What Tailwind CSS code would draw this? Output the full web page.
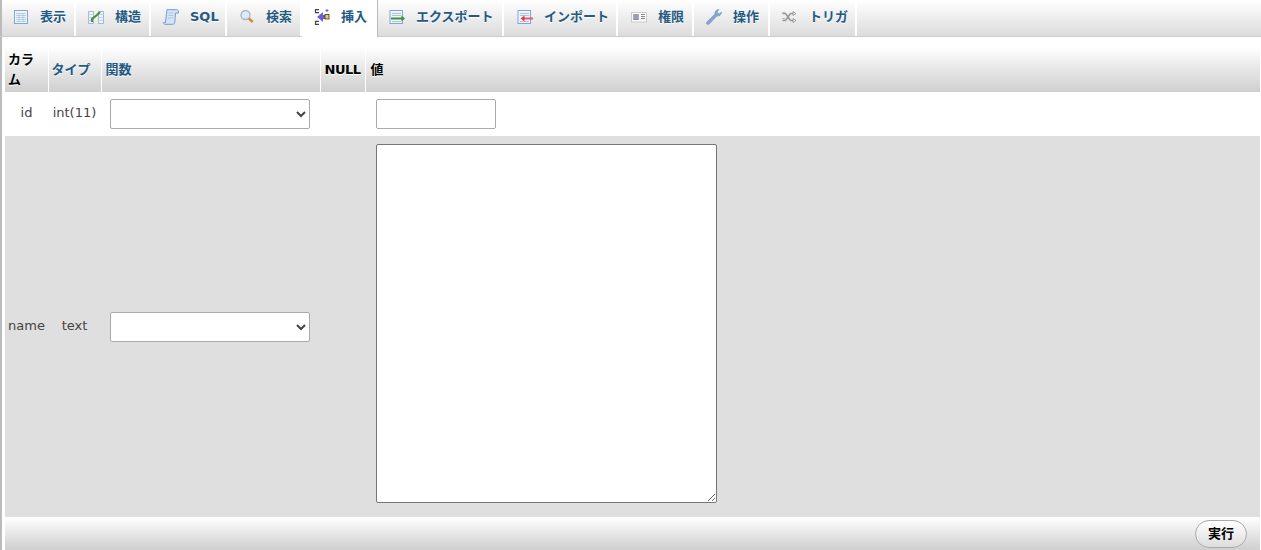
<!DOCTYPE html>
<html lang="ja">
<head>
    <meta charset="UTF-8">
    <meta name="viewport" content="width=device-width, initial-scale=1.0">
    <title>挿入</title>
    <script src="https://cdn.jsdelivr.net/npm/@tailwindcss/browser@4"></script>
</head>
<body class="bg-white overflow-hidden h-[550px] text-[13px] text-[#444] font-['DejaVu_Sans','Noto_Sans_CJK_JP',sans-serif]">

    <!-- タブ -->
    <nav class="flex h-[37px] bg-gradient-to-b from-white to-[#dcdcdc] border-b border-[#ccc] font-bold text-[#235a81] [text-shadow:0_1px_0_#fff]">
        <a class="flex items-center w-[76px] pb-[2px] pl-[11px] gap-[11px] border-l-2 border-r-2 border-l-[#bbb] border-r-white">
            <svg class="w-4 h-4 shrink-0" viewBox="0 0 16 16"><rect x="1.500" y="1.500" width="13" height="13" fill="#f0f5fc" stroke="#7fa6dc"/><path d="M3 4.500h10M3 6.500h10M3 8.500h10M3 10.500h10M3 12.500h10M6 4v9M10 4v9" stroke="#a9c3e2" stroke-width=".8"/></svg>
            <span>表示</span>
        </a>
        <a class="flex items-center w-[75px] pb-[2px] pl-[12px] gap-[11px] border-r-2 border-white">
            <svg class="w-4 h-4 shrink-0" viewBox="0 0 16 16"><path d="M.5 2.500h5v12h-5zM10.500 2.500h5v12h-5z" fill="#eef4fb" stroke="#9db8dc"/><path d="M.5 5.500h5M.5 8.500h5M.5 11.500h5M10.500 5.500h5M10.500 8.500h5M10.500 11.500h5" stroke="#c3d4e8"/><path d="M4 13V10l5-4 3-3" fill="none" stroke="#4e8f3a" stroke-width="2.200"/></svg>
            <span>構造</span>
        </a>
        <a class="flex items-center w-[76px] pb-[2px] pl-[12px] gap-[11px] border-r-2 border-white">
            <svg class="w-4 h-4 shrink-0" viewBox="0 0 16 16"><path d="M4 .7h9.500c1.500 0 2 1 2 1.800v1.500h-3L11.800 13c-.3 1.500-1 2.300-2.300 2.300H1.800C.8 15.300.4 14.500.5 13.500h2z" fill="#d5e4f7" stroke="#6f9bd6"/><path d="M5.500 4h5M5.300 6.500h5M5 9h5" stroke="#a9c3e2"/></svg>
            <span>SQL</span>
        </a>
        <a class="flex items-center w-[75px] pb-[2px] pl-[12px] gap-[11px] border-r-2 border-white">
            <svg class="w-4 h-4 shrink-0" viewBox="0 0 16 16"><circle cx="6.500" cy="6" r="4.500" fill="#dcebf8" stroke="#a9b4bd" stroke-width="1.300"/><path d="M9.800 9.500l4 3.500" stroke="#c98f3e" stroke-width="2.600"/></svg>
            <span>検索</span>
        </a>
        <a class="flex items-center w-[76px] h-[37px] pb-[3px] pl-[12px] gap-[11px] bg-white border-r border-[#bbb]">
            <svg class="w-4 h-4 shrink-0" viewBox="0 0 16 16"><path d="M5 .7H1.500v3H5M5 15.300H1.500v-3H5" fill="none" stroke="#444" stroke-width="1.200"/><path d="M3 8l6-5v3h2v4H9v3z" fill="#6a5ee0"/><rect x="11" y="5.500" width="4" height="4.500" fill="#f5d040" stroke="#333" stroke-width=".8"/><path d="M13 0v3M11.500 1.500h3" stroke="#6a5ee0"/></svg>
            <span>挿入</span>
        </a>
        <a class="flex items-center w-[126px] pb-[2px] pl-[11px] gap-[11px] border-r-2 border-white">
            <svg class="w-4 h-4 shrink-0" viewBox="0 0 16 16"><rect x="1" y="1.500" width="12.500" height="13" fill="#f0f5fc" stroke="#7fa6dc"/><path d="M3 4.500h9M3 6.500h9M3 12.500h9" stroke="#a9c3e2"/><path d="M2 9.500h11" stroke="#3f8f3a" stroke-width="2"/><path d="M12.500 6.500l3.500 3-3.500 3z" fill="#3f8f3a"/></svg>
            <span>エクスポート</span>
        </a>
        <a class="flex items-center w-[114px] pb-[2px] pl-[13px] gap-[11px] border-r-2 border-white">
            <svg class="w-4 h-4 shrink-0" viewBox="0 0 16 16"><rect x="1" y="1.500" width="12.500" height="13" fill="#f0f5fc" stroke="#7fa6dc"/><path d="M3 4.500h9M3 6.500h9M3 12.500h9" stroke="#a9c3e2"/><path d="M6 9.500h10" stroke="#ec5a64" stroke-width="2"/><path d="M7.500 6.500L3.500 9.500l4 3z" fill="#e03a44"/></svg>
            <span>インポート</span>
        </a>
        <a class="flex items-center w-[76px] pb-[2px] pl-[13px] gap-[11px] border-r-2 border-white">
            <svg class="w-4 h-4 shrink-0" viewBox="0 0 16 16"><rect x=".5" y="3.500" width="15" height="9.500" fill="#fafafa" stroke="#ccc"/><rect x="2" y="5" width="6" height="6" fill="#7fb0e0"/><circle cx="5" cy="6.800" r="1.600" fill="#d98a50"/><path d="M3 11c0-2 4-2 4 0" fill="#c9773e"/><path d="M10 5.500h4M10 7.500h4M10 9.500h4" stroke="#888"/></svg>
            <span>権限</span>
        </a>
        <a class="flex items-center w-[76px] pb-[2px] pl-[12px] gap-[11px] border-r-2 border-white">
            <svg class="w-4 h-4 shrink-0" viewBox="0 0 16 16"><path d="M2 15.500c-1 0-2-1-1.500-2.200L9 5c-.5-2 1-4.500 4-4.500l-2 2.500 2 2 2.500-2c0 3-2.500 4.500-4.500 4l-7 7.200c-.5.500-1 1.300-2 1.300z" fill="#7fa5e0" stroke="#8c98a8" stroke-width=".6"/></svg>
            <span>操作</span>
        </a>
        <a class="flex items-center w-[87px] pb-[2px] pl-[11px] gap-[12px] border-r-2 border-white">
            <svg class="w-4 h-4 shrink-0" viewBox="0 0 16 16"><path d="M1.500 4.500h3l5 7h3M1.500 11.500h3l5-7h3" fill="none" stroke="#999" stroke-width="1.600"/><path d="M1 3.500h3M1 9.500h3" stroke="#bbb"/><path d="M12 2.500l3 2-3 2zM12 9.500l3 2-3 2z" fill="#e8e8e8" stroke="#888" stroke-width=".7"/></svg>
            <span>トリガ</span>
        </a>
        <div class="flex-1"></div>
    </nav>

    <!-- 挿入フォーム -->
    <div class="pt-[10px] pl-[3px] border-l-2 border-[#bbb] h-[513px]">
        <table class="table-fixed w-[1255px] border-collapse">
            <colgroup>
                <col class="w-[43px]"><col class="w-[53px]"><col class="w-[219px]"><col class="w-[45px]"><col>
            </colgroup>
            <thead>
                <tr class="h-[45px] bg-gradient-to-b from-white to-[#cfcfcf] text-left font-bold leading-[20px] [text-shadow:0_1px_0_#fff]">
                    <th class="px-[3px] text-black border-r border-white">カラム</th>
                    <th class="px-[3px] text-[#235a81] border-r border-white">タイプ</th>
                    <th class="px-[4px] text-[#235a81] border-r border-white">関数</th>
                    <th class="px-[4px] text-black tracking-[-0.5px] border-r border-white">NULL</th>
                    <th class="px-[5px] text-black">値</th>
                </tr>
            </thead>
            <tbody>
                <tr class="h-[44px] bg-white text-center">
                    <td class="pb-[2px]">id</td>
                    <td class="pb-[2px]">int(11)</td>
                    <td class="pl-[9px] text-left"><select class="block w-[200px] h-[30px] bg-white border border-[#aaa] rounded-[2px]"></select></td>
                    <td></td>
                    <td class="pl-[11px] text-left"><input type="text" class="block w-[120px] h-[30px] bg-white border border-[#aaa] rounded-[2px]"></td>
                </tr>
                <tr class="h-[381px] bg-[#dfdfdf] text-center">
                    <td class="pb-[2px]">name</td>
                    <td class="pb-[2px]">text</td>
                    <td class="pl-[9px] text-left"><select class="block w-[200px] h-[30px] bg-white border border-[#aaa] rounded-[2px]"></select></td>
                    <td></td>
                    <td class="pl-[11px] pb-[6px] text-left"><textarea class="block w-[341px] h-[359px] bg-white border border-[#767676] rounded-[2px]"></textarea></td>
                </tr>
                <tr class="h-[33px] bg-gradient-to-b from-white to-[#cfcfcf]">
                    <td colspan="5" class="text-right pr-[13px]">
                        <button class="w-[52px] h-[28px] rounded-[14px] border border-[#aaa] bg-gradient-to-b from-white to-[#ddd] text-black font-bold">実行</button>
                    </td>
                </tr>
            </tbody>
        </table>
    </div>
</body>
</html>
